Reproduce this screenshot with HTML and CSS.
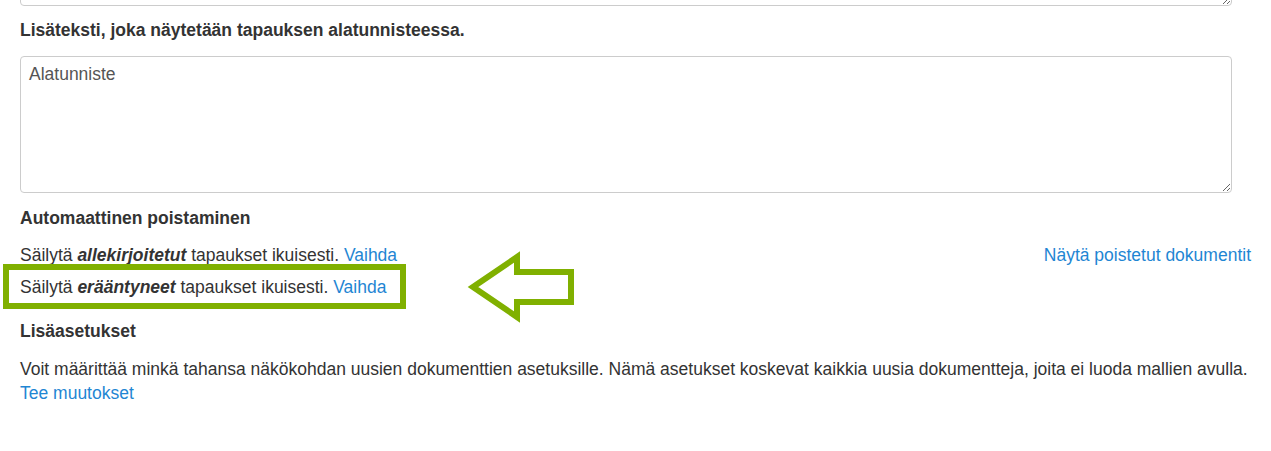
FILE: index.html
```html
<!DOCTYPE html>
<html lang="fi">

<head>
  <meta charset="UTF-8">
  <meta name="viewport" content="width=device-width, initial-scale=1.0">
  <title>Asetukset</title>
  <link rel="stylesheet" href="styles.css">
</head>

<body>
  <div class="page">
    <div class="cut">
      <textarea class="field field-top"></textarea>
    </div>

    <label class="field-label" for="footerText">Lisäteksti, joka näytetään tapauksen alatunnisteessa.</label>
    <textarea class="field" id="footerText" placeholder="Alatunniste"></textarea>

    <div class="section-title">Automaattinen poistaminen</div>
    <div class="row first">
      <span>Säilytä <b><i>allekirjoitetut</i></b> tapaukset ikuisesti. <a href="#">Vaihda</a></span>
      <a href="#">Näytä poistetut dokumentit</a>
    </div>
    <div class="row second">
      <span>Säilytä <b><i>erääntyneet</i></b> tapaukset ikuisesti. <a href="#">Vaihda</a></span>
    </div>

    <div class="section-title">Lisäasetukset</div>
    <p class="info">
      Voit määrittää minkä tahansa näkökohdan uusien dokumenttien asetuksille. Nämä asetukset koskevat kaikkia uusia dokumentteja, joita ei luoda mallien avulla.<br>
      <a href="#">Tee muutokset</a>
    </p>

    <!-- annotation drawn over the page -->
    <div class="highlight-box"></div>
    <svg class="highlight-arrow" width="120" height="80" viewBox="0 0 120 80">
      <polygon points="13,42 57,12 57,27 111,27 111,57 57,57 57,72" fill="none" stroke="#80b000" stroke-width="6" stroke-linejoin="miter" />
    </svg>
  </div>
</body>

</html>
```

FILE: styles.css
```css
body {
  font-family: "Liberation Sans", Arial, sans-serif;
  font-size: 17.5px;
  line-height: 24px;
  color: #333;
  margin: 0;
  padding: 0;
  background-color: #fff;
}

a {
  color: #1f86d3;
  text-decoration: none;
}

.page {
  position: relative;
  padding: 0 20px;
}

.cut {
  height: 6px;
  overflow: hidden;
}

.field {
  display: block;
  box-sizing: border-box;
  width: 1212px;
  height: 137px;
  margin: 0;
  padding: 5px 8px;
  border: 1px solid #ccc;
  border-radius: 4px;
  font-family: "Liberation Sans", Arial, sans-serif;
  font-size: 17.5px;
  line-height: 24px;
  color: #555;
}

.field::placeholder {
  color: #555;
}

.field-top {
  height: 100px;
  margin-top: -94px;
}

.field-label {
  display: block;
  font-weight: bold;
  margin: 12px 0 14px;
}

.section-title {
  font-weight: bold;
  margin: 13px 0 13px;
}

.row {
  display: flex;
  justify-content: space-between;
}

.row.first {
  margin-bottom: 8px;
}

.row.second {
  margin-bottom: 20px;
}

.row.second + .section-title {
  margin-top: 0;
  margin-bottom: 14px;
}

.info {
  margin: 0;
}

.highlight-box {
  position: absolute;
  left: 3px;
  top: 264px;
  width: 403px;
  height: 45px;
  box-sizing: border-box;
  border: 6px solid #80b000;
}

.highlight-arrow {
  position: absolute;
  left: 460px;
  top: 245px;
}
```
